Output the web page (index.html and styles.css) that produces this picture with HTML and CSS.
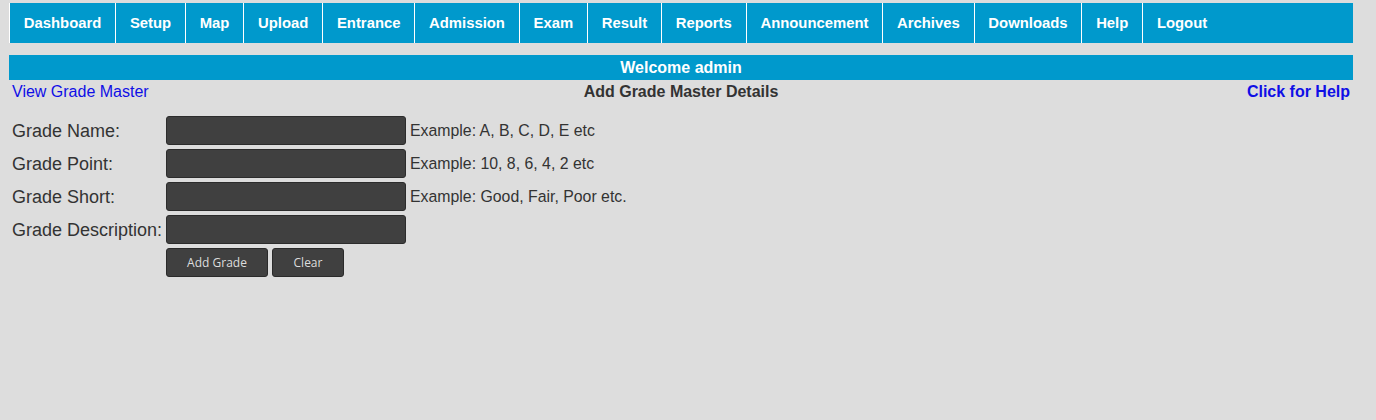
FILE: index.html
```html
<!DOCTYPE html>
<html>
<head>
<meta charset="utf-8">
<title>Add Grade Master</title>
<link rel="stylesheet" href="styles.css">
</head>
<body>
<div class="page">
  <nav class="menu">
    <a class="item" href="#">Dashboard</a>
    <a class="item" href="#">Setup</a>
    <a class="item" href="#">Map</a>
    <a class="item" href="#">Upload</a>
    <a class="item" href="#">Entrance</a>
    <a class="item" href="#">Admission</a>
    <a class="item" href="#">Exam</a>
    <a class="item" href="#">Result</a>
    <a class="item" href="#">Reports</a>
    <a class="item" href="#">Announcement</a>
    <a class="item" href="#">Archives</a>
    <a class="item" href="#">Downloads</a>
    <a class="item" href="#">Help</a>
    <a class="item" href="#">Logout</a>
  </nav>
  <div class="welcome">Welcome admin</div>
  <div class="titlebar">
    <a class="link" href="#">View Grade Master</a>
    <span class="title">Add Grade Master Details</span>
    <a class="link help" href="#">Click for Help</a>
  </div>
  <form class="form">
    <label class="label">Grade Name:</label>
    <input class="field" type="text">
    <span class="hint">Example: A, B, C, D, E etc</span>

    <label class="label">Grade Point:</label>
    <input class="field" type="text">
    <span class="hint">Example: 10, 8, 6, 4, 2 etc</span>

    <label class="label">Grade Short:</label>
    <input class="field" type="text">
    <span class="hint">Example: Good, Fair, Poor etc.</span>

    <label class="label">Grade Description:</label>
    <input class="field" type="text">
    <span class="hint"></span>

    <span class="label"></span>
    <div class="buttons">
      <button class="btn add" type="button">Add Grade</button>
      <button class="btn clear" type="button">Clear</button>
    </div>
    <span class="hint"></span>
  </form>
</div>
</body>
</html>
```
FILE: styles.css
```css
html, body {
  margin: 0;
  padding: 0;
  background: #dddddd;
}
body {
  font-family: "Liberation Sans", Arial, sans-serif;
  color: #333333;
}
.page {
  margin: 3px 23px 0 9px;
}
.menu {
  display: flex;
  height: 40px;
  background: #0099cc;
  border-left: 1px solid #ffffff;
}
.item {
  display: flex;
  align-items: center;
  padding: 0 13.8px 1px 13.8px;
  border-right: 1px solid #ffffff;
  color: #ffffff;
  font-weight: bold;
  font-size: 14.85px;
  text-decoration: none;
}
.item:last-child {
  border-right: none;
}
.welcome {
  margin-top: 12px;
  height: 25px;
  line-height: 25px;
  background: #0099cc;
  color: #ffffff;
  font-weight: bold;
  font-size: 16px;
  text-align: center;
}
.titlebar {
  display: flex;
  justify-content: space-between;
  align-items: center;
  height: 24px;
  padding: 0 3px;
  font-size: 16px;
}
.link {
  color: #0f0fe6;
  text-decoration: none;
  flex: 1;
}
.help {
  font-weight: bold;
  text-align: right;
}
.title {
  font-weight: bold;
  color: #333333;
  flex: 0 0 auto;
}
.form {
  display: grid;
  grid-template-columns: 154px 240px auto;
  grid-auto-rows: 29px;
  row-gap: 4px;
  justify-content: start;
  margin-top: 12px;
  padding-left: 3px;
}
.label {
  display: flex;
  align-items: center;
  padding-top: 1px;
  font-size: 18px;
  color: #333333;
  white-space: nowrap;
}
.field {
  box-sizing: border-box;
  width: 240px;
  height: 29px;
  margin: 0;
  background: #404040;
  border: 1px solid #2c2c2c;
  border-radius: 3px;
  color: #eeeeee;
  outline: none;
}
.hint {
  display: flex;
  align-items: center;
  padding-left: 4px;
  font-size: 15.85px;
  color: #333333;
  white-space: nowrap;
}
.buttons {
  display: flex;
  gap: 4px;
}
.btn {
  box-sizing: border-box;
  height: 29px;
  margin: 0;
  background: #404040;
  border: 1px solid #2a2a2a;
  border-radius: 3px;
  color: #dddddd;
  font-family: "Open Sans", "Noto Sans", sans-serif;
  font-size: 12px;
}
.add {
  width: 102px;
}
.clear {
  width: 72px;
}
```
